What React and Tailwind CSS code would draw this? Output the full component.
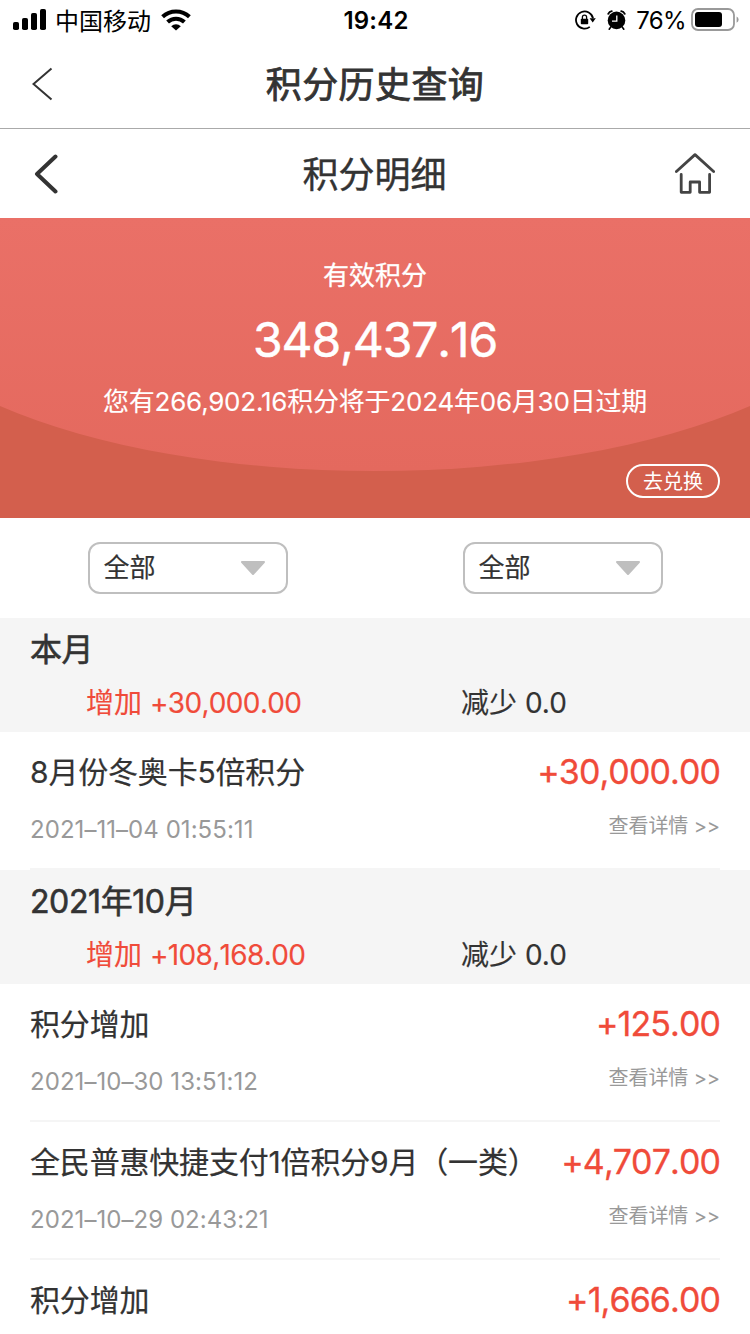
const MONTHS = [
  {
    title: '本月',
    added: '+30,000.00',
    reduced: '0.0',
    records: [
      {
        name: '8月份冬奥卡5倍积分',
        time: '2021–11–04 01:55:11',
        amount: '+30,000.00',
      },
    ],
  },
  {
    title: '2021年10月',
    added: '+108,168.00',
    reduced: '0.0',
    records: [
      { name: '积分增加', time: '2021–10–30 13:51:12', amount: '+125.00' },
      {
        name: '全民普惠快捷支付1倍积分9月（一类）',
        time: '2021–10–29 02:43:21',
        amount: '+4,707.00',
      },
      { name: '积分增加', time: '', amount: '+1,666.00' },
    ],
  },
];

const SignalIcon = () => (
  <svg width="34" height="22" viewBox="0 0 34 22" aria-hidden="true">
    <rect x="0" y="13" width="6" height="8" rx="1.8" />
    <rect x="9" y="9" width="6" height="12" rx="1.8" />
    <rect x="18" y="4" width="6" height="17" rx="1.8" />
    <rect x="27" y="0" width="6" height="21" rx="1.8" />
  </svg>
);

const WifiIcon = () => (
  <svg width="30" height="22" viewBox="0 0 30 22" aria-hidden="true">
    <g fill="none" stroke="#000" strokeWidth="4">
      <path d="M1.6 7.8a19.4 19.4 0 0 1 26.8 0" />
      <path d="M6.6 13a12.2 12.2 0 0 1 16.8 0" />
    </g>
    <path d="M10.2 17.2a7.2 7.2 0 0 1 9.6 0L15 21.6z" />
  </svg>
);

const RotationLockIcon = () => (
  <svg width="21" height="20" viewBox="0 0 21 20" aria-hidden="true">
    <path
      d="M14.8 16.9A8.6 8.6 0 1 1 18 8.2"
      fill="none"
      stroke="#000"
      strokeWidth="1.8"
    />
    <path d="M14.6 8.2h6.2l-3.1 4.2z" />
    <rect x="5.8" y="8.7" width="7.4" height="5.6" rx="0.8" />
    <path
      d="M7.4 9V7.2a2.1 2.1 0 0 1 4.2 0V9"
      fill="none"
      stroke="#000"
      strokeWidth="1.3"
    />
  </svg>
);

const AlarmIcon = () => (
  <svg width="19" height="20" viewBox="0 0 19 20" aria-hidden="true">
    <circle cx="9.5" cy="10.4" r="8.8" />
    <path
      d="M1.2 3.8A5 5 0 0 1 4.8 1.2M17.8 3.8A5 5 0 0 0 14.2 1.2"
      fill="none"
      stroke="#000"
      strokeWidth="1.8"
      strokeLinecap="round"
    />
    <path
      d="M3.8 17 2.2 19.2M15.2 17l1.6 2.2"
      stroke="#000"
      strokeWidth="1.6"
      strokeLinecap="round"
    />
    <path d="M9.8 5.4v5.8H5" fill="none" stroke="#fff" strokeWidth="1.3" />
  </svg>
);

const BatteryIcon = () => (
  <svg width="48" height="24" viewBox="0 0 48 24" aria-hidden="true">
    <rect
      x="1"
      y="1"
      width="42"
      height="21"
      rx="6"
      fill="none"
      stroke="#999"
      strokeWidth="1.8"
    />
    <rect x="4" y="4" width="27" height="15" rx="3" />
    <path d="M45.6 8.6a3.4 3.4 0 0 1 0 6.2z" fill="#999" />
  </svg>
);

const HomeIcon = () => (
  <svg
    width="40"
    height="42"
    viewBox="0 0 40 42"
    fill="none"
    stroke="#444"
    strokeWidth="2.8"
    strokeLinecap="round"
    strokeLinejoin="round"
    aria-hidden="true"
  >
    <path d="M1.4 18.5 20 1.6l18.6 16.9" />
    <path d="M6.2 21.5v17.8h9V29h9.4v10.3h10V21.5" />
  </svg>
);

const StatusBar = () => (
  <div className="grid h-10 grid-cols-3 items-center pr-[11px] pl-[13px] text-black">
    <div className="flex items-center">
      <SignalIcon />
      <span className="ml-2 pt-[3px] text-2xl">中国移动</span>
      <span className="ml-[10px]">
        <WifiIcon />
      </span>
    </div>
    <div className="pt-[2px] text-center text-2xl font-semibold tracking-[0.2px]">
      19:42
    </div>
    <div className="flex items-center justify-end">
      <RotationLockIcon />
      <span className="ml-[11px]">
        <AlarmIcon />
      </span>
      <span className="mr-[5px] ml-[10px] pt-[2px] text-2xl tracking-[-0.6px]">
        76%
      </span>
      <BatteryIcon />
    </div>
  </div>
);

const NavBar = () => (
  <header className="flex h-[89px] items-center justify-between border-b border-[#aaa] px-8">
    <button type="button" aria-label="返回" className="w-10">
      <svg
        width="22"
        height="34"
        viewBox="0 0 22 34"
        fill="none"
        stroke="#333"
        strokeWidth="2"
      >
        <path d="M19.5 1.5 1.5 17l18 15.5" />
      </svg>
    </button>
    <h1 className="pt-[2px] text-4xl tracking-[0.4px] [-webkit-text-stroke:0.8px]">
      积分历史查询
    </h1>
    <span className="w-10" />
  </header>
);

const PageHeader = () => (
  <header className="flex h-[89px] items-center justify-between pr-[35px] pl-[34px]">
    <button type="button" aria-label="返回" className="w-10">
      <svg
        width="24"
        height="40"
        viewBox="0 0 24 40"
        fill="none"
        stroke="#333"
        strokeWidth="4"
        strokeLinecap="round"
        strokeLinejoin="round"
      >
        <path d="M21.5 2.5 3 20l18.5 17.5" />
      </svg>
    </button>
    <h2 className="pt-[2px] text-4xl [-webkit-text-stroke:0.4px]">积分明细</h2>
    <button type="button" aria-label="首页">
      <HomeIcon />
    </button>
  </header>
);

const Balance = () => (
  <section className="relative h-[300px] bg-[#d35f4d] pt-[38px] text-center text-white">
    <svg
      className="absolute inset-0"
      width="750"
      height="300"
      viewBox="0 0 750 300"
      aria-hidden="true"
    >
      <defs>
        <linearGradient id="dome" x1="0" y1="0" x2="0" y2="1">
          <stop offset="0" stopColor="#ea7067" />
          <stop offset="1" stopColor="#e4695e" />
        </linearGradient>
      </defs>
      <path d="M0 0h750v188A500 192 0 0 1 0 188z" fill="url(#dome)" />
    </svg>
    <div className="relative flex flex-col">
      <p className="text-[26px] leading-10 [-webkit-text-stroke:0.3px]">
        有效积分
      </p>
      <p className="mt-[14px] text-5xl leading-[60px] tracking-[-1.1px] [font-kerning:none] [-webkit-text-stroke:0.5px]">
        348,437.16
      </p>
      <p className="mt-3 text-[26px] leading-10 tracking-[-0.22px] [-webkit-text-stroke:0.1px]">
        您有266,902.16积分将于2024年06月30日过期
      </p>
      <button
        type="button"
        className="mt-[42px] mr-[30px] h-[34px] w-[94px] self-end rounded-full border-2 border-white pt-px text-xl leading-[30px]"
      >
        去兑换
      </button>
    </div>
  </section>
);

const FilterSelect = () => (
  <button
    type="button"
    className="flex h-[52px] w-[200px] items-center justify-between rounded-xl border-2 border-[#bfbfbf] pr-5 pl-[14px]"
  >
    <span className="text-[26px] leading-[46px] [-webkit-text-stroke:0.2px]">
      全部
    </span>
    <svg width="26" height="16" viewBox="0 0 26 16" aria-hidden="true">
      <path
        d="M2 2h22L13 14z"
        fill="#bfbfbf"
        stroke="#bfbfbf"
        strokeWidth="2"
        strokeLinejoin="round"
      />
    </svg>
  </button>
);

const RecordItem = ({ name, time, amount }) => (
  <li className="mx-[30px] h-[138px] border-b-2 border-[#f5f5f5] pt-5">
    <div className="flex justify-between leading-10">
      <span className="text-[30px] tracking-[-0.18px] [-webkit-text-stroke:0.2px]">
        {name}
      </span>
      <span className="text-[34px] tracking-[-0.9px] text-[#f04b3a] [font-kerning:none] [-webkit-text-stroke:0.3px]">
        {amount}
      </span>
    </div>
    {time && (
      <div className="mt-[18px] flex items-start justify-between text-[#999]">
        <span className="pt-[5px] text-2xl leading-[30px] tracking-[0.05px]">
          {time}
        </span>
        <span className="text-xl leading-8 tracking-[-0.1px]">
          查看详情 &gt;&gt;
        </span>
      </div>
    )}
  </li>
);

const MonthGroup = ({ title, added, reduced, records }) => (
  <section>
    <div className="h-[114px] bg-[#f5f5f5] pt-[2px]">
      <h3 className="px-[30px] text-[32px] leading-[60px] tracking-[-0.4px] [-webkit-text-stroke:0.6px]">
        {title}
      </h3>
      <div className="grid grid-cols-2 pt-px text-[28px] leading-[44px] [-webkit-text-stroke:0.15px]">
        <span className="pl-[86px] text-[#f04b3a]">
          增加{' '}
          <span className="tracking-[-0.65px] [font-kerning:none]">{added}</span>
        </span>
        <span className="pl-[86px]">减少 {reduced}</span>
      </div>
    </div>
    <ul>
      {records.map((record) => (
        <RecordItem key={record.amount} {...record} />
      ))}
    </ul>
  </section>
);

const App = () => (
  <div className="h-[1334px] w-[750px] overflow-hidden bg-white font-[Inter,'Noto_Sans_CJK_SC',sans-serif] text-[#333]">
    <StatusBar />
    <NavBar />
    <PageHeader />
    <Balance />
    <div className="grid h-[100px] grid-cols-2 place-items-center">
      <FilterSelect />
      <FilterSelect />
    </div>
    {MONTHS.map((month) => (
      <MonthGroup key={month.title} {...month} />
    ))}
  </div>
);

export default App;
